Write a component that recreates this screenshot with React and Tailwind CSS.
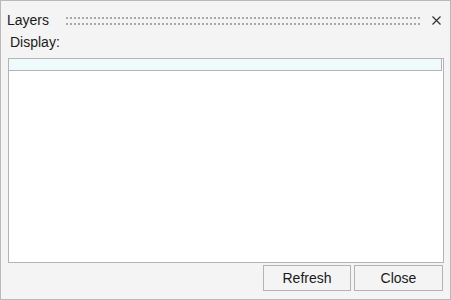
import React from "react";

const Grip = () => (
  <svg width="356" height="8" className="block" shapeRendering="crispEdges">
    {[0, 6].map((y) =>
      Array.from({ length: 89 }, (_, i) => (
        <rect key={`${y}-${i}`} x={i * 4} y={y} width="2" height="2" fill="#a8a8a8" />
      ))
    )}
  </svg>
);

const App = () => {
  return (
    <div className="flex h-[300px] w-[451px] flex-col border border-[#b9b9b9] bg-[#f4f4f4] font-['Liberation_Sans',Arial,sans-serif] text-[14px] text-[#1a1a1a]">
      <div className="mt-[9px] flex h-[20px] items-center">
        <span className="ml-[6px] w-[59px] leading-[20px]">Layers</span>
        <div className="mt-[1px]">
          <Grip />
        </div>
        <button type="button" className="ml-[9px] flex h-[20px] w-[10px] items-center justify-center">
          <svg width="9" height="9" viewBox="0 0 9 9">
            <path d="M0.5 0.5 L8.5 8.5 M8.5 0.5 L0.5 8.5" stroke="#333" strokeWidth="1.2" />
          </svg>
        </button>
      </div>

      <div className="ml-[9px] mt-[2px] h-[20px] leading-[20px]">Display:</div>

      <div className="ml-[7px] mt-[6px] h-[205px] w-[436px] border border-[#b4b4b4] bg-white">
        <div className="h-[12px] w-[433px] border-b border-r border-[#b4b4b4] bg-[#eefafc]" />
      </div>

      <div className="mr-[7px] mt-[2px] flex justify-end gap-[3px]">
        <button
          type="button"
          className="h-[26px] w-[88px] border border-[#b4b4b4] bg-[#f4f4f4] text-[14px] text-[#1a1a1a]"
        >
          Refresh
        </button>
        <button
          type="button"
          className="h-[26px] w-[89px] border border-[#b4b4b4] bg-[#f4f4f4] text-[14px] text-[#1a1a1a]"
        >
          Close
        </button>
      </div>
    </div>
  );
};

export default App;
